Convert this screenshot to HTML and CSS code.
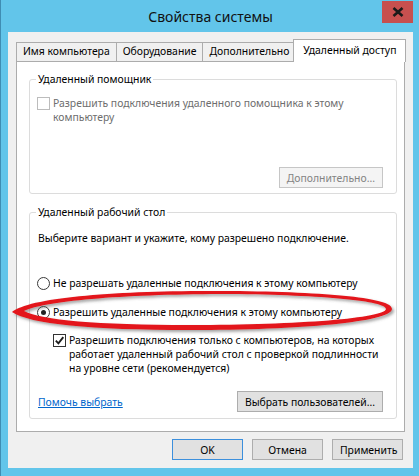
FILE: index.html
```html
<!DOCTYPE html>
<html lang="ru">
<head>
  <meta charset="UTF-8">
  <title>Свойства системы</title>
  <link rel="stylesheet" href="styles.css">
</head>
<body>
<div class="window">
  <header class="titlebar">
    <span></span>
    <div class="title">Свойства системы</div>
    <div class="controls">
      <button class="close" aria-label="Закрыть">
        <svg width="12" height="10" viewBox="0 0 12 10"><path d="M1.5 1 L10.5 9 M10.5 1 L1.5 9" stroke="#1a1a1a" stroke-width="2.6" fill="none"/></svg>
      </button>
    </div>
  </header>
  <div class="client">
    <nav class="tabs">
      <div class="tab">Имя компьютера</div>
      <div class="tab">Оборудование</div>
      <div class="tab">Дополнительно</div>
      <div class="tab active">Удаленный доступ</div>
    </nav>
    <section class="panel">
      <fieldset class="group assist">
        <legend>Удаленный помощник</legend>
        <div class="option disabled">
          <span class="check"></span>
          <span>Разрешить подключения удаленного помощника к этому<br>компьютеру</span>
        </div>
        <div class="actions">
          <button class="btn" disabled>Дополнительно...</button>
        </div>
      </fieldset>
      <fieldset class="group rdp">
        <legend>Удаленный рабочий стол</legend>
        <p class="intro">Выберите вариант и укажите, кому разрешено подключение.</p>
        <div class="option first-radio">
          <span class="radio"></span>
          <span>Не разрешать удаленные подключения к этому компьютеру</span>
        </div>
        <div class="option second-radio">
          <span class="radio on"></span>
          <span>Разрешить удаленные подключения к этому компьютеру</span>
        </div>
        <div class="option sub">
          <span class="check on">
            <svg width="11" height="11" viewBox="0 0 11 11"><path d="M1.8 5.6 L4.4 8.3 L9.3 2.2" stroke="#1c1c1c" stroke-width="1.9" fill="none"/></svg>
          </span>
          <span>Разрешить подключения только с компьютеров, на которых<br>работает удаленный рабочий стол с проверкой подлинности<br>на уровне сети (рекомендуется)</span>
        </div>
        <div class="actions split">
          <a href="#" class="help">Помочь выбрать</a>
          <button class="btn">Выбрать пользователей...</button>
        </div>
      </fieldset>
    </section>
    <footer class="footer">
      <button class="btn default">OK</button>
      <button class="btn">Отмена</button>
      <button class="btn">Применить</button>
    </footer>
  </div>

  <!-- red marker drawn round the selected option -->
  <svg class="marker" width="419" height="476" viewBox="0 0 419 476">
    <defs>
      <filter id="shade" x="-5%" y="-30%" width="110%" height="160%">
        <feDropShadow dx="2" dy="2" stdDeviation="1.4" flood-color="#555" flood-opacity="0.55"/>
      </filter>
    </defs>
    <path filter="url(#shade)" fill="#e3141b" fill-rule="evenodd"
      d="M12 312 C30 297 120 290 230 291 C330 292 393 298 392 309 C391 322 300 330 190 330 C90 330 30 324 12 312 Z
         M24 311 C48 300 130 294 230 294 C325 295 386 301 386 309 C385 318 300 325 190 325 C96 325 42 320 24 311 Z"/>
  </svg>
</div>
</body>
</html>
```
FILE: styles.css
```css
body {
  margin: 0;
  background: #ffffff;
  font-family: 'Noto Sans', 'Liberation Sans', sans-serif;
  font-size: 10.4px;
  line-height: 14px;
  color: #000;
}
.window {
  position: relative;
  width: 419px;
  height: 476px;
  box-sizing: border-box;
  padding: 0 6px 8px 7px;
  background: #62c5ea;
  border-left: 1px solid #3f8db3;
  display: flex;
  flex-direction: column;
}
.titlebar {
  height: 32px;
  display: grid;
  grid-template-columns: 1fr auto 1fr;
  align-items: start;
}
.title {
  font-size: 14px;
  line-height: 32px;
  padding-top: 1px;
  color: #111;
}
.controls {
  display: flex;
  justify-content: flex-end;
}
.close {
  width: 31px;
  height: 22px;
  margin-top: 1px;
  padding: 0;
  border: none;
  background: #c7504f;
  display: flex;
  align-items: center;
  justify-content: center;
}
.client {
  flex: 1;
  background: #f0f0f0;
  padding: 7px 8px 0 8px;
  display: flex;
  flex-direction: column;
}
.tabs {
  display: flex;
  align-items: flex-end;
  height: 22px;
}
.tab {
  height: 18px;
  line-height: 17px;
  padding: 0 6px;
  border: 1px solid #acacac;
  border-bottom: none;
  margin-right: -1px;
  background: #f0f0f0;
  white-space: nowrap;
}
.tab.active {
  position: relative;
  z-index: 1;
  height: 22px;
  line-height: 20px;
  margin: 0 -2px -1px -2px;
  padding: 0 9px;
  background: #fff;
}
.panel {
  background: #fff;
  border: 1px solid #acacac;
  height: 371px;
  box-sizing: border-box;
  padding: 10px 7px 0 12px;
}
.group {
  margin: 0;
  padding: 10px 13px 5px 6px;
  border: 1px solid #dcdcdc;
  border-radius: 3px;
  min-inline-size: 0;
}
.group legend {
  padding: 0 2px;
  line-height: 14px;
}
.rdp {
  margin-top: 11px;
  padding-top: 12px;
  padding-bottom: 6px;
}
.option {
  display: flex;
  align-items: flex-start;
  gap: 3px;
  padding-left: 1px;
  white-space: nowrap;
}
.option.disabled {
  color: #6d6d6d;
}
.check,
.radio {
  flex: none;
  width: 13px;
  height: 13px;
  box-sizing: border-box;
  border: 1px solid #333;
  background: #fff;
  margin-top: 1px;
  display: flex;
  align-items: center;
  justify-content: center;
}
.disabled .check {
  border-color: #bcbcbc;
}
.radio {
  border-radius: 50%;
  border-color: #3a3a3a;
}
.radio.on::after {
  content: '';
  width: 5px;
  height: 5px;
  border-radius: 50%;
  background: #222;
}
.intro {
  margin: 0 0 0 2px;
}
.first-radio {
  margin-top: 31px;
}
.second-radio {
  margin-top: 15px;
}
.sub {
  margin-top: 14px;
  padding-left: 17px;
}
.actions {
  display: flex;
  justify-content: flex-end;
  margin-top: 43px;
}
.actions.split {
  justify-content: space-between;
  align-items: center;
  margin-top: 16px;
}
.help {
  color: #0066cc;
  margin-left: 2px;
}
.btn {
  font-family: inherit;
  font-size: 10.4px;
  height: 21px;
  padding: 0 7px;
  border: 1px solid #adadad;
  background: #e1e1e1;
  color: #000;
}
.btn:disabled {
  background: #f4f4f4;
  border-color: #c6c6c6;
  color: #838383;
}
.footer {
  display: flex;
  justify-content: flex-end;
  gap: 9px;
  padding: 7px 2px 0 0;
}
.footer .btn {
  width: 71px;
}
.btn.default {
  border-color: #3c8fdc;
}
.marker {
  position: absolute;
  left: -1px;
  top: 0;
  pointer-events: none;
}
```
